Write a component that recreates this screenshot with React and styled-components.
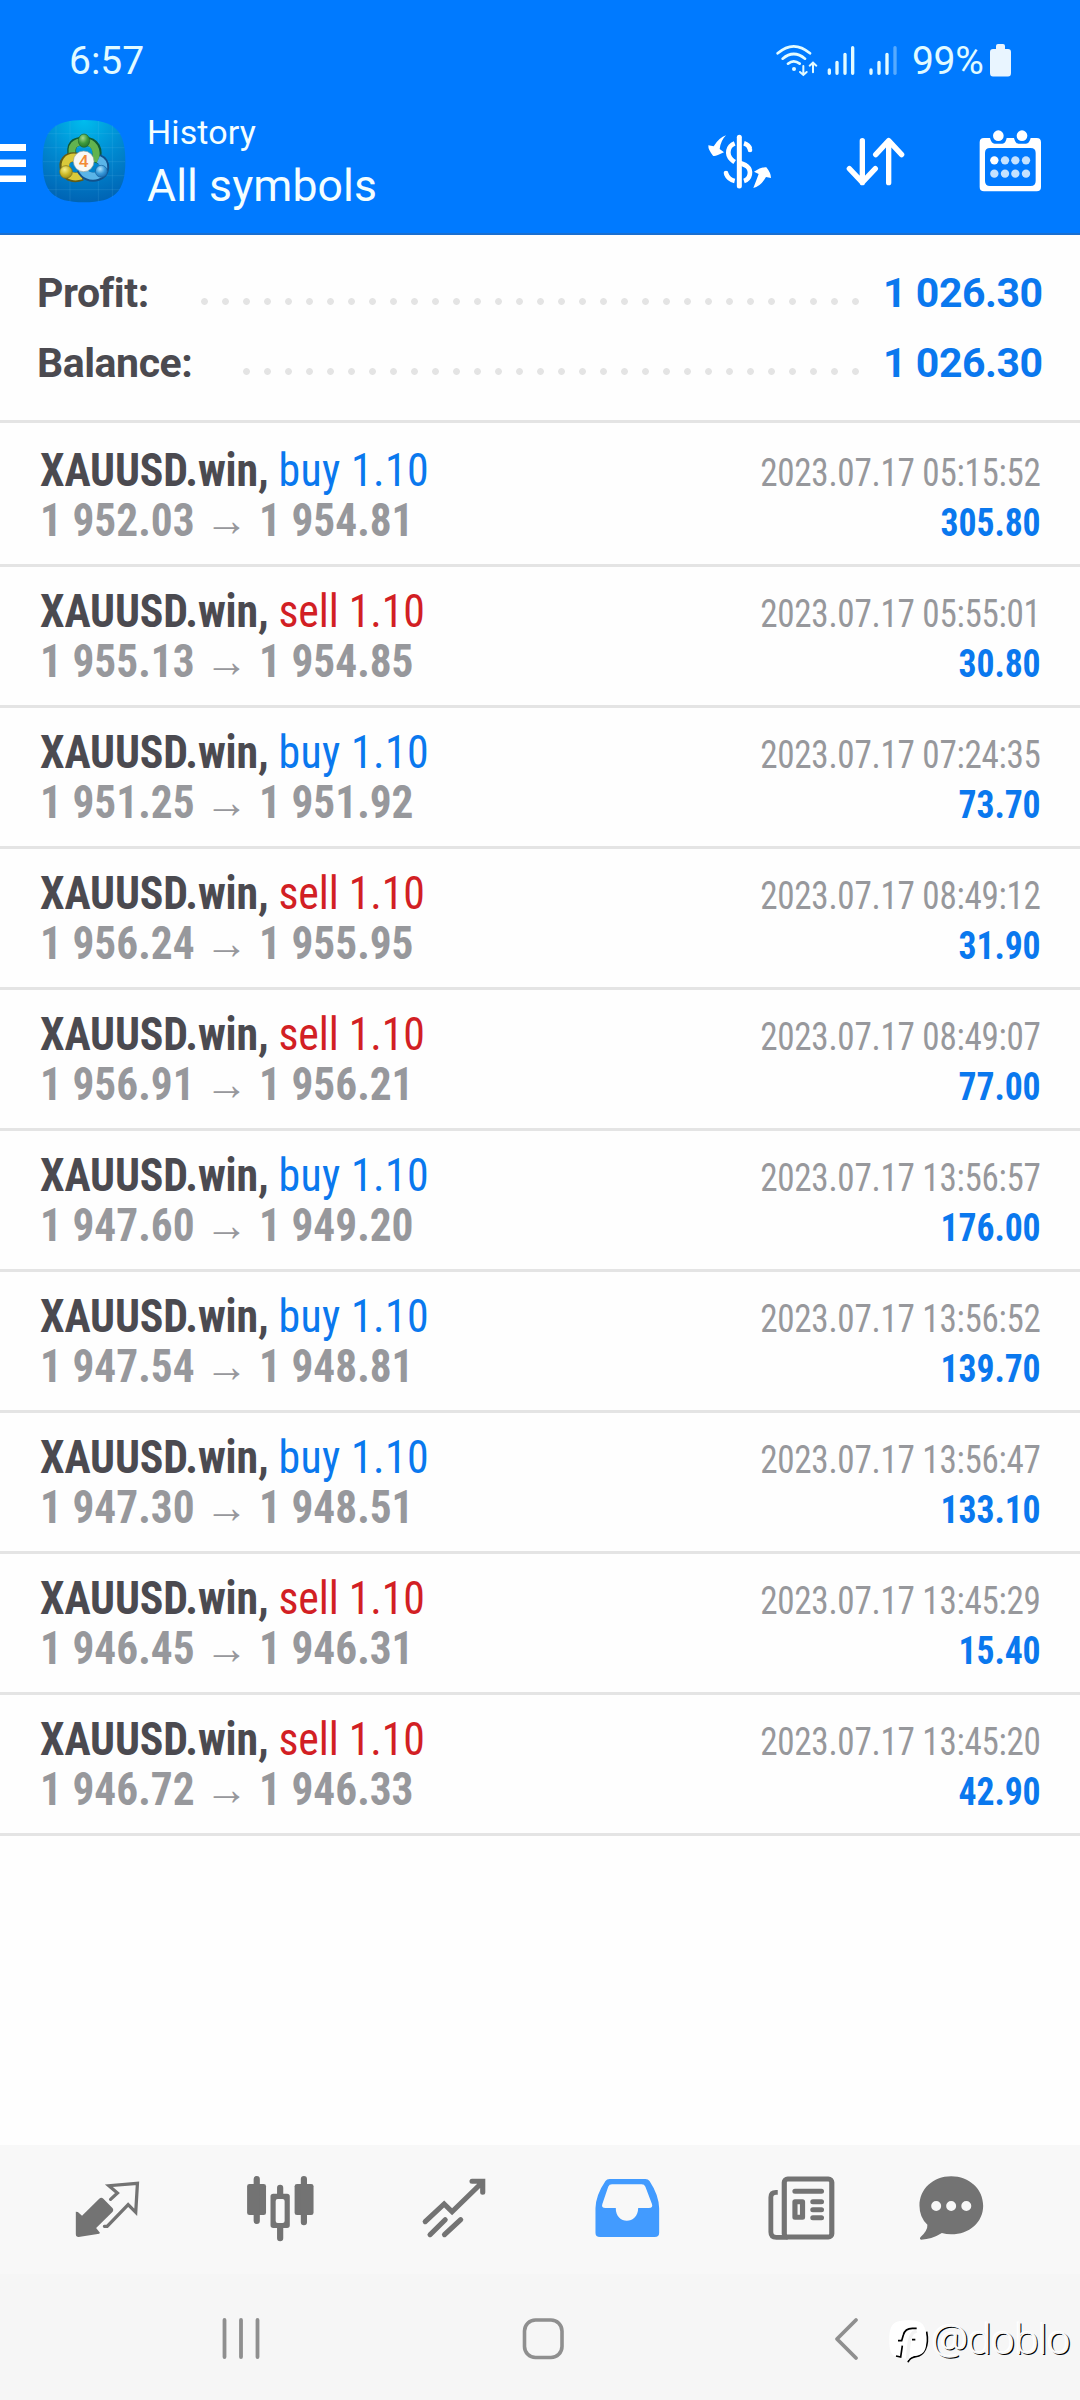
import React from "react";
import styled, { createGlobalStyle } from "styled-components";

const GlobalStyle = createGlobalStyle`
  *, *::before, *::after { box-sizing: border-box; }
  body { margin: 0; background: #fff; font-family: Roboto, "Liberation Sans", sans-serif; }
`;

const Screen = styled.div`
  width: 1080px;
  height: 2400px;
  display: flex;
  flex-direction: column;
  background: #fefefe;
  overflow: hidden;
`;

const Header = styled.header`
  height: 235px;
  background: #007aff;
  border-bottom: 2px solid #1a6fd0;
  color: #f4feff;
`;

const StatusBar = styled.div`
  height: 110px;
  padding: 36px 68px 0 69px;
  display: flex;
  align-items: flex-start;
  font-size: 39px;
  line-height: 50px;
  color: #e2fbff;
`;

const Clock = styled.span`
  flex: 1;
`;

const Percent = styled.span`
  margin-left: 10px;
  width: 78px;
  letter-spacing: -0.3px;
`;

const Toolbar = styled.div`
  display: flex;
  height: 123px;
`;

const Glyph = styled.svg`
  display: block;
  flex: none;
  width: ${(p) => p.$w}px;
  height: ${(p) => p.$h}px;
  margin-top: ${(p) => p.$top || 0}px;
  margin-left: ${(p) => p.$left || 0}px;
`;

const Titles = styled.div`
  flex: 1;
  padding: 2px 0 0 21px;
`;

const Subtitle = styled.div`
  font-size: 34px;
  line-height: 40px;
  letter-spacing: 0.1px;
`;

const Title = styled.div`
  margin-top: 6px;
  font-size: 44.5px;
  line-height: 56px;
  letter-spacing: 0.1px;
`;

const Actions = styled.div`
  display: flex;
  gap: 65px;
  padding: 17px 35px 0 0;
`;

const Summary = styled.section`
  height: 188px;
  padding: 23px 38px 0 37px;
  border-bottom: 3px solid #e4e4e4;
`;

const SummaryRow = styled.div`
  display: flex;
  justify-content: space-between;
  height: 70px;
  line-height: 70px;
  font-size: 41px;
  font-weight: 700;
  letter-spacing: -0.45px;
  color: #4b4a50;
`;

const SummaryLabel = styled.span`
  flex: 1;
`;

const Dots = styled.span`
  width: ${(p) => p.$count * 21}px;
  height: 7px;
  margin: 40px 17px 0 0;
  background: radial-gradient(circle at 50% 50%, #e4e4e4 3px, transparent 3.8px) 0 0 / 21px 7px repeat-x;
`;

const SummaryValue = styled.span`
  width: 159px;
  text-align: right;
  white-space: nowrap;
  color: #0a78ee;
`;

const Deals = styled.main`
  flex: 1;
  padding-top: 3px;
`;

const Deal = styled.article`
  display: flex;
  justify-content: space-between;
  height: 141px;
  padding: 19px 39px 0 40px;
  border-bottom: 3px solid #e4e4e4;
  line-height: 50px;
  font-family: "Roboto Condensed", Roboto, sans-serif;
  font-stretch: 75%;
  white-space: nowrap;
`;

const DealLeft = styled.div`
  font-size: 46px;
`;

const DealRight = styled.div`
  padding-top: 3px;
  font-size: 39px;
  text-align: right;
`;

const Symbol = styled.div`
  font-weight: 700;
  letter-spacing: -0.15px;
  transform: scaleX(0.953);
  transform-origin: 0 50%;
  color: #4b4a50;
`;

const Side = styled.span`
  font-weight: 400;
  letter-spacing: ${(p) => (p.$side === "buy" ? "0.4px" : "-0.1px")};
  color: ${(p) => (p.$side === "buy" ? "#0a78ee" : "#d21f24")};
`;

const Prices = styled.div`
  font-weight: 700;
  word-spacing: 0.6px;
  transform: scaleX(0.942);
  transform-origin: 0 50%;
  color: #97989c;
`;

const When = styled.div`
  letter-spacing: -0.3px;
  transform: scaleX(0.9);
  transform-origin: 100% 50%;
  color: #97989c;
`;

const Gain = styled.div`
  font-weight: 700;
  letter-spacing: -0.1px;
  transform: scaleX(0.915);
  transform-origin: 100% 50%;
  color: #0a78ee;
`;

const TabBar = styled.nav`
  display: flex;
  height: 129px;
  padding: 27px 0 0 20px;
  background: #f8f8f8;
`;

const Tab = styled.div`
  width: ${(p) => p.$w || 173.6}px;
  display: flex;
  justify-content: center;
`;

const SystemNav = styled.footer`
  position: relative;
  display: flex;
  height: 126px;
  padding-top: 42px;
  background: #f6f6f6;
`;

const Watermark = styled.div`
  position: absolute;
  left: 888px;
  top: 45px;
  display: flex;
  align-items: flex-start;
  font-family: "Open Sans", "Noto Sans", sans-serif;
  font-weight: 300;
  font-size: 41px;
  line-height: 48px;
  color: #f8f8f8;
  text-shadow: -1.5px -1.5px 0 #fff, 1.2px 0.8px 0 #000;
`;

const Handle = styled.span`
  margin: -5px 0 0 2px;
  letter-spacing: -0.7px;
`;

const deals = [
  ["buy", "1 952.03", "1 954.81", "2023.07.17 05:15:52", "305.80"],
  ["sell", "1 955.13", "1 954.85", "2023.07.17 05:55:01", "30.80"],
  ["buy", "1 951.25", "1 951.92", "2023.07.17 07:24:35", "73.70"],
  ["sell", "1 956.24", "1 955.95", "2023.07.17 08:49:12", "31.90"],
  ["sell", "1 956.91", "1 956.21", "2023.07.17 08:49:07", "77.00"],
  ["buy", "1 947.60", "1 949.20", "2023.07.17 13:56:57", "176.00"],
  ["buy", "1 947.54", "1 948.81", "2023.07.17 13:56:52", "139.70"],
  ["buy", "1 947.30", "1 948.51", "2023.07.17 13:56:47", "133.10"],
  ["sell", "1 946.45", "1 946.31", "2023.07.17 13:45:29", "15.40"],
  ["sell", "1 946.72", "1 946.33", "2023.07.17 13:45:20", "42.90"],
];

const ConnectionIcons = () => (
  <Glyph $w={128} $h={40} $top={6} viewBox="282 126 384 120" fill="none" stroke="#e2fbff" strokeLinecap="round">
    <path d="M293 160Q341 118 390 160M308 176Q341 148 375 176M324 191Q341 177 359 191" strokeWidth="8" />
    <circle cx="342" cy="207" r="6" fill="#e2fbff" stroke="none" />
    <path d="M370 198V224M360 216L370 225L380 216M399 217V189M389 197L399 188L409 197" strokeWidth="6" />
    <path d="M448 210V220M471 187V220M495 163V220M518 143V220M573 210V220M597 187V220M621 163V220" strokeWidth="10" />
    <path d="M645 143V220" strokeWidth="10" opacity=".38" />
  </Glyph>
);

const BatteryIcon = () => (
  <Glyph $w={22} $h={34} $top={8} viewBox="0 0 22 34" fill="#e9f5ff">
    <path d="M6 2Q6 0 8 0H13Q15 0 15 2V5H18Q21 5 21 8V29Q21 32.5 18 32.5H3Q0 32.5 0 29V8Q0 5 3 5H6Z" />
  </Glyph>
);

const MenuIcon = () => (
  <Glyph $w={26} $h={40} $top={33} viewBox="0 0 26 40" fill="#fff">
    <path d="M0 1H26V8H0ZM0 16.5H26V24H0ZM0 32.5H26V39H0Z" />
  </Glyph>
);

const AppLogo = () => (
  <Glyph $w={84} $h={84} $top={9} $left={16} viewBox="126 357 252 252">
    <defs>
      <radialGradient id="tile" cx=".5" cy="0" r="1">
        <stop offset="0" stopColor="#00bdee" />
        <stop offset=".5" stopColor="#008bd2" />
        <stop offset="1" stopColor="#0064b4" />
      </radialGradient>
      <radialGradient id="green" cx=".4" cy=".3" r=".8">
        <stop offset="0" stopColor="#a6d98d" />
        <stop offset=".5" stopColor="#3f9c3c" />
        <stop offset="1" stopColor="#1c6b2a" />
      </radialGradient>
      <radialGradient id="gold" cx=".4" cy=".3" r=".8">
        <stop offset="0" stopColor="#f7f08a" />
        <stop offset=".5" stopColor="#cdbb2b" />
        <stop offset="1" stopColor="#8e8118" />
      </radialGradient>
      <radialGradient id="sky" cx=".4" cy=".3" r=".8">
        <stop offset="0" stopColor="#b4e4fb" />
        <stop offset=".5" stopColor="#389ad9" />
        <stop offset="1" stopColor="#1560a8" />
      </radialGradient>
    </defs>
    <path d="M252 360C345 360 376 392 376 484S345 607 252 607S128 576 128 484S159 360 252 360Z" fill="url(#tile)" />
    <path d="M143 401H361M131 443H373M129 485H375M131 527H373M143 569H361M168 376V592M210 363V605M295 363V605M337 376V592" stroke="#6fc6f0" strokeOpacity=".22" strokeWidth="2" fill="none" />
    <path d="M219 478C206 430 225 424 252 424C286 424 300 448 286 488" fill="none" stroke="#0f5b35" strokeWidth="27" />
    <path d="M219 474C208 434 227 425 252 425C280 425 296 448 285 486" fill="none" stroke="#62b34f" strokeWidth="21" />
    <path d="M234 473C199 466 186 488 196 512C204 533 224 536 246 528" fill="none" stroke="#625c16" strokeWidth="29" />
    <path d="M232 473C202 468 190 488 199 511C206 530 224 533 244 527" fill="none" stroke="#d9c93a" strokeWidth="23" />
    <path d="M296 476C322 486 318 521 293 529C272 536 252 526 243 508" fill="none" stroke="#11518c" strokeWidth="28" />
    <path d="M295 478C318 488 315 519 292 526C273 533 254 524 246 508" fill="none" stroke="#5ab5e8" strokeWidth="22" />
    <ellipse cx="252" cy="422" rx="17" ry="20" fill="url(#green)" stroke="#23662b" strokeWidth="2" />
    <circle cx="198" cy="516" r="19" fill="url(#gold)" stroke="#75691a" strokeWidth="2" />
    <circle cx="304" cy="514" r="18" fill="url(#sky)" stroke="#17629f" strokeWidth="2" />
    <circle cx="251" cy="484" r="31" fill="#f8f8f5" stroke="#98a59b" strokeWidth="2" />
    <text x="251" y="502" textAnchor="middle" fontFamily="Roboto, sans-serif" fontWeight="500" fontSize="52" fill="#f28a35">4</text>
  </Glyph>
);

const DollarIcon = () => (
  <Glyph $w={70} $h={70} viewBox="75 380 210 210" fill="#fff">
    <path d="M178 411V557" stroke="#fff" strokeWidth="15" strokeLinecap="round" />
    <path d="M164 429C143 437 139 462 154 477C158 481 161 483 164 485M192 429C202 432 208 439 210 446M138 520C143 532 151 539 164 542M192 542C211 536 216 511 201 498C196 493 187 491 178 487" fill="none" stroke="#fff" strokeWidth="14" />
    <circle cx="138" cy="518" r="7" />
    <circle cx="210" cy="449" r="7" />
    <path d="M138 405Q118 411 101 438L85 435Q84 448 99 466Q104 470 132 456L119 446Q122 421 138 405Z" />
    <path d="M220 563Q229 540 236 521L222 514Q246 499 259 501Q273 518 273 533L258 530Q242 558 220 563Z" />
  </Glyph>
);

const SortIcon = () => (
  <Glyph $w={70} $h={70} viewBox="480 380 210 210" fill="none" stroke="#fff" strokeWidth="16" strokeLinecap="round" strokeLinejoin="round">
    <path d="M547 421V547M508 505L547 546L586 505M626 547V421M587 463L626 421L665 463" />
  </Glyph>
);

const CalendarIcon = () => (
  <Glyph $w={70} $h={70} viewBox="885 380 210 210">
    <path fill="#fff" fillRule="evenodd" d="M912 413H930Q934 430 944 430H967Q977 430 980 413H1002Q1006 430 1015 430H1038Q1048 430 1052 413H1070Q1083 413 1083 426V560Q1083 573 1070 573H912Q899 573 899 560V426Q899 413 912 413ZM930 443Q915 443 915 458V542Q915 557 930 557H1052Q1067 557 1067 542V458Q1067 443 1052 443Z" />
    <circle cx="955" cy="406" r="16" fill="#fff" />
    <circle cx="1026" cy="406" r="16" fill="#fff" />
    {[943, 975, 1006, 1038].map((x, i) => (
      <g key={x} fill="#c4e2ff">
        <circle cx={x} cy="480" r="12.5" fill={i === 0 ? "#fff" : "#c4e2ff"} />
        <circle cx={x} cy="520" r="12.5" />
      </g>
    ))}
  </Glyph>
);

const tabIcon = { $w: 72.3, $h: 70, preserveAspectRatio: "none" };

const QuotesIcon = () => (
  <Glyph {...tabIcon} viewBox="207 126 210 210" fill="#737373">
    <path d="M221 245L227 246L239 257L289 206Q295 201 301 206L328 235Q332 240 328 245L280 294L291 308L289 311L229 321Q221 321 221 313Z" />
    <path d="M322 208L342 189L317 167L400 160L395 247L373 224L312 289H304" fill="none" stroke="#737373" strokeWidth="9.5" strokeLinecap="round" />
  </Glyph>
);

const ChartIcon = () => (
  <Glyph {...tabIcon} viewBox="708 126 210 210" fill="#737373">
    <rect x="717" y="162" width="55" height="93" rx="7" />
    <rect x="855" y="162" width="55" height="93" rx="7" />
    <path d="M745 147V273M882 147V277M813 173V195M813 290V325" stroke="#737373" strokeWidth="18" strokeLinecap="round" />
    <path fillRule="evenodd" d="M793 191H833Q841 191 841 199V286Q841 294 833 294H793Q785 294 785 286V199Q785 191 793 191ZM806 207Q800 207 800 213V273Q800 279 806 279H820Q826 279 826 273V213Q826 207 820 207Z" />
  </Glyph>
);

const TradeIcon = () => (
  <Glyph {...tabIcon} viewBox="1211 126 210 210" fill="none" stroke="#737373" strokeWidth="15" strokeLinecap="round">
    <path d="M1232 275L1287 222L1310 245L1395 160M1368 154H1399V187" />
    <path d="M1246 314L1290 269M1288 314L1335 269" />
  </Glyph>
);

const HistoryIcon = () => (
  <Glyph {...tabIcon} viewBox="148 126 210 210" fill="#429bff">
    <path fillRule="evenodd" d="M202 147H306Q314 147 318 153Q345 195 346 235V308Q346 321 333 321H174Q161 321 161 308V235Q162 195 190 153Q194 147 202 147ZM209 163Q201 163 198 170L181 222Q177 234 190 234H220C219 285 285 285 285 234H316Q329 234 325 222L306 170Q303 163 295 163Z" />
  </Glyph>
);

const NewsIcon = () => (
  <Glyph {...tabIcon} viewBox="654 126 210 210" fill="none" stroke="#737373">
    <rect x="710" y="147" width="138" height="174" rx="10" strokeWidth="15" />
    <path d="M691 187H686Q671 187 671 202V306Q671 322 687 322H720" strokeWidth="14" />
    <path d="M741 184H818M793 215H818M793 239H818M793 263H818" strokeWidth="15" strokeLinecap="round" />
    <rect x="741" y="215" width="22" height="47" strokeWidth="15" strokeLinejoin="round" />
  </Glyph>
);

const ChatIcon = () => (
  <Glyph {...tabIcon} viewBox="1088 126 210 210" fill="#737373">
    <path fillRule="evenodd" d="M1193 139C1246 139 1286 178 1286 227S1246 313 1193 313Q1179 313 1166 309Q1137 328 1106 329Q1099 326 1105 320Q1125 301 1124 284Q1101 262 1101 227C1101 178 1140 139 1193 139ZM1149.500 213A14.500 15 0 1 0 1149.500 243A14.500 15 0 1 0 1149.500 213ZM1193 213A14.500 15 0 1 0 1193 243A14.500 15 0 1 0 1193 213ZM1237 213A14.500 15 0 1 0 1237 243A14.500 15 0 1 0 1237 213Z" />
  </Glyph>
);

const tabs = [QuotesIcon, ChartIcon, TradeIcon, HistoryIcon, NewsIcon];

export default function App() {
  return (
    <Screen>
      <GlobalStyle />
      <Header>
        <StatusBar>
          <Clock>6:57</Clock>
          <ConnectionIcons />
          <Percent>99%</Percent>
          <BatteryIcon />
        </StatusBar>
        <Toolbar>
          <MenuIcon />
          <AppLogo />
          <Titles>
            <Subtitle>History</Subtitle>
            <Title>All symbols</Title>
          </Titles>
          <Actions>
            <DollarIcon />
            <SortIcon />
            <CalendarIcon />
          </Actions>
        </Toolbar>
      </Header>
      <Summary>
        <SummaryRow>
          <SummaryLabel>Profit:</SummaryLabel>
          <Dots $count={32} />
          <SummaryValue>1 026.30</SummaryValue>
        </SummaryRow>
        <SummaryRow>
          <SummaryLabel>Balance:</SummaryLabel>
          <Dots $count={30} />
          <SummaryValue>1 026.30</SummaryValue>
        </SummaryRow>
      </Summary>
      <Deals>
        {deals.map(([side, open, close, when, gain]) => (
          <Deal key={when}>
            <DealLeft>
              <Symbol>
                XAUUSD.win, <Side $side={side}>{side} 1.10</Side>
              </Symbol>
              <Prices>
                {open} → {close}
              </Prices>
            </DealLeft>
            <DealRight>
              <When>{when}</When>
              <Gain>{gain}</Gain>
            </DealRight>
          </Deal>
        ))}
      </Deals>
      <TabBar>
        {tabs.map((Icon, i) => (
          <Tab key={i}>
            <Icon />
          </Tab>
        ))}
        <Tab $w={126}>
          <ChatIcon />
        </Tab>
      </TabBar>
      <SystemNav>
        <Glyph $w={38} $h={44} $left={222} viewBox="0 0 38 44" fill="none" stroke="#8f8f8f" strokeWidth="3.8" strokeLinecap="round">
          <path d="M2.500 4V41M19 4V41M35.500 4V41" />
        </Glyph>
        <Glyph $w={44} $h={44} $left={261} viewBox="0 0 44 44" fill="none" stroke="#8f8f8f" strokeWidth="3.6">
          <rect x="3.500" y="4" width="37.500" height="37.500" rx="11" />
        </Glyph>
        <Glyph $w={28} $h={46} $left={268} viewBox="0 0 28 46" fill="none" stroke="#8f8f8f" strokeWidth="3.8" strokeLinecap="round" strokeLinejoin="round">
          <path d="M23 4L4 23L23 42" />
        </Glyph>
        <Watermark>
          <Glyph $w={42} $h={48} viewBox="0 0 126 144">
            <path d="M116 38Q122 70 112 91Q103 110 83 113Q64 116 60 130" fill="none" stroke="#000" strokeWidth="5" />
            <path d="M61 4C105 4 115 18 115 65C115 105 98 108 77 111Q62 118 56 125Q54 118 45 118C12 115 4 103 4 65C4 18 14 4 61 4Z" fill="#fff" />
            <path d="M58 122L63 74Q66 50 76 40L86 36" fill="none" stroke="#f3f3f3" strokeWidth="10" />
            <path d="M30 65H41L46 48Q51 28 73 28H86M24 111L38 114L43 80M72 62H82" fill="none" stroke="#000" strokeWidth="5" />
          </Glyph>
          <Handle>@doblo</Handle>
        </Watermark>
      </SystemNav>
    </Screen>
  );
}
